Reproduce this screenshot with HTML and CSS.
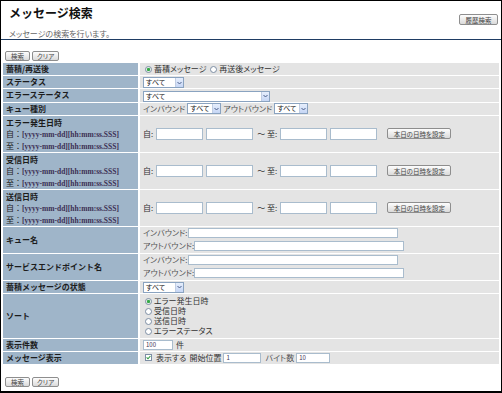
FILE: index.html
```html
<!DOCTYPE html>
<html lang="ja">
<head>
  <meta charset="UTF-8">
  <title>メッセージ検索</title>
  <link rel="stylesheet" href="styles.css">
</head>
<body>
  <div class="page">
    <div class="header">
      <div class="heading">
        <h1>メッセージ検索</h1>
        <p class="lead">メッセージの検索を行います。</p>
      </div>
      <button class="btn btn-history">履歴検索</button>
    </div>

    <div class="actions">
      <button class="btn">検索</button>
      <button class="btn">クリア</button>
    </div>

    <table class="form">
      <tr>
        <th>蓄積/再送後</th>
        <td>
          <span class="radio checked"></span>蓄積メッセージ
          <span class="radio"></span>再送後メッセージ
        </td>
      </tr>
      <tr>
        <th>ステータス</th>
        <td><span class="select select-s">すべて<span class="arrow"><svg width="5" height="4" viewBox="0 0 5 4"><path d="M0.5 1 L2.5 3 L4.5 1" fill="none" stroke="#4a5f8a" stroke-width="1"/></svg></span></span></td>
      </tr>
      <tr>
        <th>エラーステータス</th>
        <td><span class="select select-l">すべて<span class="arrow"><svg width="5" height="4" viewBox="0 0 5 4"><path d="M0.5 1 L2.5 3 L4.5 1" fill="none" stroke="#4a5f8a" stroke-width="1"/></svg></span></span></td>
      </tr>
      <tr>
        <th>キュー種別</th>
        <td>
          <div class="inline">
            <span class="muted">インバウンド</span>
            <span class="select select-xs">すべて<span class="arrow"><svg width="5" height="4" viewBox="0 0 5 4"><path d="M0.5 1 L2.5 3 L4.5 1" fill="none" stroke="#4a5f8a" stroke-width="1"/></svg></span></span>
            <span class="muted">アウトバウンド</span>
            <span class="select select-xs">すべて<span class="arrow"><svg width="5" height="4" viewBox="0 0 5 4"><path d="M0.5 1 L2.5 3 L4.5 1" fill="none" stroke="#4a5f8a" stroke-width="1"/></svg></span></span>
          </div>
        </td>
      </tr>

      <tr class="row-date">
        <th>
          <div>エラー発生日時</div>
          <div class="hint">自：<b>[yyyy-mm-dd][hh:mm:ss.SSS]</b></div>
          <div class="hint">至：<b>[yyyy-mm-dd][hh:mm:ss.SSS]</b></div>
        </th>
        <td>
          <div class="date-range">
            <span>自:</span><input class="input input-date"><input class="input input-date">
            <span class="to">〜 至:</span><input class="input input-date"><input class="input input-date">
            <button class="btn btn-now">本日の日時を設定</button>
          </div>
        </td>
      </tr>
      <tr class="row-date">
        <th>
          <div>受信日時</div>
          <div class="hint">自：<b>[yyyy-mm-dd][hh:mm:ss.SSS]</b></div>
          <div class="hint">至：<b>[yyyy-mm-dd][hh:mm:ss.SSS]</b></div>
        </th>
        <td>
          <div class="date-range">
            <span>自:</span><input class="input input-date"><input class="input input-date">
            <span class="to">〜 至:</span><input class="input input-date"><input class="input input-date">
            <button class="btn btn-now">本日の日時を設定</button>
          </div>
        </td>
      </tr>
      <tr class="row-date">
        <th>
          <div>送信日時</div>
          <div class="hint">自：<b>[yyyy-mm-dd][hh:mm:ss.SSS]</b></div>
          <div class="hint">至：<b>[yyyy-mm-dd][hh:mm:ss.SSS]</b></div>
        </th>
        <td>
          <div class="date-range">
            <span>自:</span><input class="input input-date"><input class="input input-date">
            <span class="to">〜 至:</span><input class="input input-date"><input class="input input-date">
            <button class="btn btn-now">本日の日時を設定</button>
          </div>
        </td>
      </tr>

      <tr class="row-pair">
        <th>キュー名</th>
        <td>
          <div class="line"><span class="muted">インバウンド:</span><input class="input input-wide"></div>
          <div class="line"><span class="muted">アウトバウンド:</span><input class="input input-wide"></div>
        </td>
      </tr>
      <tr class="row-pair">
        <th>サービスエンドポイント名</th>
        <td>
          <div class="line"><span class="muted">インバウンド:</span><input class="input input-wide"></div>
          <div class="line"><span class="muted">アウトバウンド:</span><input class="input input-wide"></div>
        </td>
      </tr>
      <tr>
        <th>蓄積メッセージの状態</th>
        <td><span class="select select-s">すべて<span class="arrow"><svg width="5" height="4" viewBox="0 0 5 4"><path d="M0.5 1 L2.5 3 L4.5 1" fill="none" stroke="#4a5f8a" stroke-width="1"/></svg></span></span></td>
      </tr>
      <tr class="row-sort">
        <th>ソート</th>
        <td>
          <div class="opt"><span class="radio checked"></span>エラー発生日時</div>
          <div class="opt"><span class="radio"></span>受信日時</div>
          <div class="opt"><span class="radio"></span>送信日時</div>
          <div class="opt"><span class="radio"></span>エラーステータス</div>
        </td>
      </tr>
      <tr>
        <th>表示件数</th>
        <td>
          <div class="inline"><input class="input input-count" value="100"><span>件</span></div>
        </td>
      </tr>
      <tr>
        <th>メッセージ表示</th>
        <td>
          <div class="inline">
            <span class="check"><svg width="5" height="5" viewBox="0 0 5 5"><path d="M0.6 2.4 L2 3.8 L4.4 1" fill="none" stroke="#2f9a3e" stroke-width="1.1"/></svg></span>
            <span>表示する</span>
            <span class="tight">開始位置</span><input class="input input-start" value="1">
            <span class="muted">バイト数</span><input class="input input-bytes" value="10">
          </div>
        </td>
      </tr>
    </table>

    <div class="actions actions-bottom">
      <button class="btn">検索</button>
      <button class="btn">クリア</button>
    </div>
  </div>
</body>
</html>
```

FILE: styles.css
```css
* {
  box-sizing: border-box;
}

html, body {
  margin: 0;
  padding: 0;
}

body {
  font-family: "Noto Sans CJK JP", "Noto Sans", sans-serif;
  font-size: 8px;
  color: #333;
  background: #fff;
}

.page {
  width: 502px;
  height: 393px;
  border: 1px solid #000;
  border-bottom-width: 2px;
  overflow: hidden;
}

/* header */
.header {
  display: flex;
  justify-content: space-between;
  height: 39px;
  padding: 4px 3px 0 8px;
  border-bottom: 1px solid #1f3d64;
}

h1 {
  margin: 0;
  font-size: 12px;
  line-height: 16px;
  font-weight: bold;
  color: #111;
}

.lead {
  margin: 8px 0 0;
  font-size: 8px;
  line-height: 10px;
  color: #666;
  font-feature-settings: "palt";
}

.btn {
  height: 10px;
  padding: 0 4px;
  font-family: inherit;
  font-size: 6.5px;
  line-height: 8px;
  color: #444;
  background: linear-gradient(#fdfdfd, #dadada);
  border: 1px solid #8e8e8e;
  border-radius: 2px;
  font-feature-settings: "palt";
}

.btn-history {
  margin-top: 9px;
  width: 39px;
  height: 11px;
}

.actions {
  display: flex;
  gap: 2px;
  padding: 11px 0 1px 4px;
}

.actions .btn {
  min-width: 25px;
}

.actions-bottom {
  padding-top: 12px;
}

/* form table */
.form {
  width: 500px;
  border-spacing: 2px 1px;
  margin: 0;
}

.form th {
  width: 135px;
  height: 12px;
  padding: 0 3px;
  text-align: left;
  vertical-align: middle;
  font-size: 8px;
  line-height: 12px;
  font-weight: bold;
  color: #1c1c1c;
  background: #9fb5c9;
  white-space: nowrap;
}

.form td {
  height: 12px;
  padding: 0 3px;
  vertical-align: middle;
  line-height: 12px;
  background: #e4e4e4;
  white-space: nowrap;
  font-feature-settings: "palt";
}

.row-date th {
  height: 35px;
  padding-top: 1px;
  line-height: 11px;
}

.row-date td {
  height: 35px;
}

.row-pair th,
.row-pair td {
  height: 26px;
}

.row-sort th,
.row-sort td {
  height: 44px;
}

.hint {
  font-weight: normal;
  color: #222;
}

.hint b {
  font-family: "Liberation Serif", serif;
  font-size: 7.5px;
  color: #3b2e52;
}

.muted {
  color: #555;
}

.inline {
  display: flex;
  align-items: center;
  gap: 2px;
  height: 12px;
}

/* controls */
.input {
  height: 12px;
  padding: 0 2px;
  border: 1px solid #a9bccd;
  background: #fff;
  font-family: inherit;
  font-size: 6px;
  color: #3b2e52;
  outline: none;
}

.input-date {
  width: 47px;
}

.date-range {
  display: flex;
  align-items: center;
  gap: 3px;
}

.to {
  margin: 0 0 0 1px;
}

.btn-now {
  margin-left: 7px;
  height: 11px;
  width: 64px;
}

.line {
  display: flex;
  align-items: center;
  height: 12px;
  margin: 0;
}

.line + .line {
  margin-top: 1px;
}

.input-wide {
  width: 210px;
  height: 10px;
}

.input-count {
  width: 30px;
  height: 10px;
  margin-right: 1px;
}

.input-start {
  width: 38px;
  height: 10px;
  margin-right: 2px;
}

.input-bytes {
  width: 34px;
  height: 10px;
}

.tight {
  margin-left: 1px;
}

.select {
  display: inline-flex;
  align-items: center;
  justify-content: space-between;
  height: 11px;
  padding-left: 2px;
  font-size: 7px;
  line-height: 9px;
  color: #222;
  background: #fff;
  border: 1px solid #8aa3c0;
  vertical-align: middle;
}

.select-s {
  width: 41px;
}

.select-l {
  width: 127px;
}

.select-xs {
  width: 34px;
}

.arrow {
  display: flex;
  align-items: center;
  justify-content: center;
  width: 8px;
  height: 9px;
  background: linear-gradient(#e6eefc, #c6d6f5);
  border-left: 1px solid #c0cde3;
}

.radio {
  display: inline-block;
  width: 7px;
  height: 7px;
  margin: 0 2px 0 2px;
  border: 1px solid #7d8ea4;
  border-radius: 50%;
  background: #fff;
  vertical-align: -1px;
}

.radio.checked {
  background: radial-gradient(circle, #34a848 0, #34a848 1.3px, #cfe9cf 1.8px, #fff 2.5px);
}

.opt {
  line-height: 10px;
}

.check {
  display: flex;
  align-items: center;
  justify-content: center;
  width: 7px;
  height: 7px;
  margin: 0 2px 0 2px;
  border: 1px solid #7d8ea4;
  background: #fff;
}
```
